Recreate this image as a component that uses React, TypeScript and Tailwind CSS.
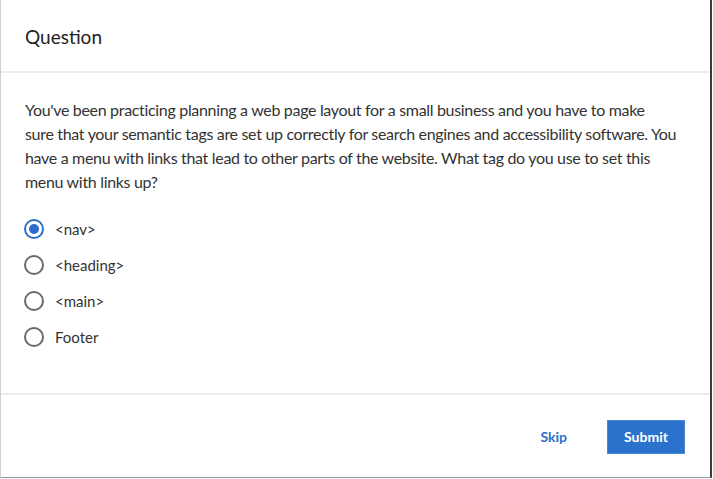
import { useState } from "react";

const options = ["<nav>", "<heading>", "<main>", "Footer"];

export default function App() {
  const [selected, setSelected] = useState(0);

  return (
    <div className="w-[713px] h-[479px] bg-white" style={{ fontFamily: "Lato, 'Noto Sans', sans-serif" }}>
      <div className="w-[712px] h-[478px] flex flex-col border-l border-l-[#cfcfcf] border-r-2 border-r-[#3c3c3c] border-b border-b-[#9a9a9a]">
        {/* Header */}
        <div className="h-[73px] flex items-center px-[24px] pt-[3px] border-b-2 border-b-[#ececec] shrink-0">
          <h1 className="text-[19px] text-[#222]">Question</h1>
        </div>

        {/* Body */}
        <div className="flex-1 px-[24px] pt-[25px]">
          <p className="text-[16px] leading-[24px] tracking-[-0.32px] text-[#333] whitespace-nowrap">
            You've been practicing planning a web page layout for a small business and you have to make
            <br />
            sure that your semantic tags are set up correctly for search engines and accessibility software. You
            <br />
            have a menu with links that lead to other parts of the website. What tag do you use to set this
            <br />
            menu with links up?
          </p>

          <div className="mt-[17px] ml-[-1px] flex flex-col">
            {options.map((opt, i) => (
              <label key={i} className="h-[36px] flex items-center gap-[11px] cursor-pointer" onClick={() => setSelected(i)}>
                <span
                  className={
                    selected === i
                      ? "w-[20px] h-[20px] rounded-full border-2 border-[#2d6fc8] flex items-center justify-center"
                      : "w-[20px] h-[20px] rounded-full border-2 border-[#6b6b6b] flex items-center justify-center"
                  }
                >
                  {selected === i && <span className="w-[10px] h-[10px] rounded-full bg-[#2d6fc8]" />}
                </span>
                <span className="text-[15px] text-[#333]">{opt}</span>
              </label>
            ))}
          </div>
        </div>

        {/* Footer */}
        <div className="h-[84px] shrink-0 border-t-2 border-t-[#ececec] flex items-center justify-end pr-[25px] pt-[1px]">
          <button className="text-[14px] font-bold text-[#2d6fc8] px-[12px] mr-[28px]">Skip</button>
          <button className="w-[78px] h-[34px] bg-[#2a72cc] border border-[#4a88d6] text-white text-[14px] font-bold">
            Submit
          </button>
        </div>
      </div>
    </div>
  );
}
